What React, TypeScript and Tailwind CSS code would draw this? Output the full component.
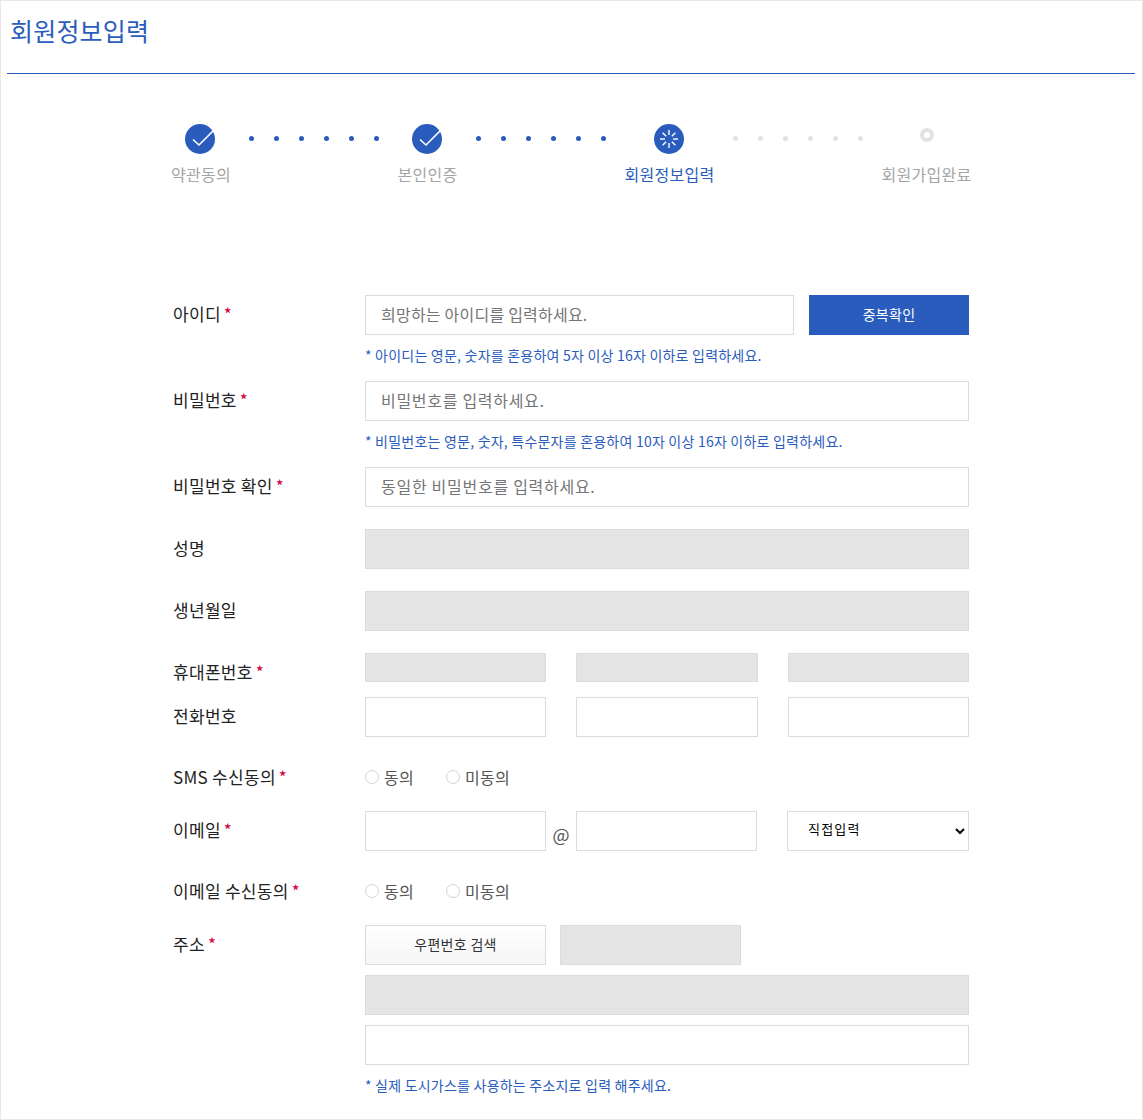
import React from "react";

const FONT = "[font-family:'Noto_Sans_CJK_KR','Noto_Sans',sans-serif]";

function Star() {
  return <span className="ml-[3px] text-[#d3003c]">*</span>;
}

function Check() {
  return (
    <span className="flex h-[30px] w-[30px] items-center justify-center rounded-full bg-[#2a5cbd]">
      <svg width="30" height="30" viewBox="0 0 30 30" fill="none" stroke="#fff" strokeWidth="1.6">
        <path d="M8 15.5 L14 21 L28.5 6.5" />
      </svg>
    </span>
  );
}

function Spinner() {
  const lines = [0, 45, 90, 135, 180, 225, 270, 315];
  return (
    <span className="flex h-[30px] w-[30px] items-center justify-center rounded-full bg-[#2a5cbd]">
      <svg width="30" height="30" viewBox="0 0 30 30" stroke="#fff" strokeWidth="1.4">
        {lines.map((a) => (
          <line key={a} x1="15" y1="6" x2="15" y2="11" transform={`rotate(${a} 15 15)`} />
        ))}
      </svg>
    </span>
  );
}

function Dots({ active }: { active: boolean }) {
  return (
    <div className="mt-[12px] flex w-[130px] gap-[20px]">
      {[0, 1, 2, 3, 4, 5].map((i) => (
        <span key={i} className={active ? "h-[5px] w-[5px] rounded-full bg-[#2a5cbd]" : "h-[5px] w-[5px] rounded-full bg-[#e2e2e2]"} />
      ))}
    </div>
  );
}

function Step({ w, iconClass = "", icon, label, active }: { w: string; iconClass?: string; icon: React.ReactNode; label: string; active?: boolean }) {
  return (
    <div className={`flex flex-col items-center ${w}`}>
      <div className={`flex h-[31px] items-start ${iconClass}`}>{icon}</div>
      <div className={active ? "mt-[7px] text-[16px] leading-[24px] tracking-[0.28px] text-[#2a5cbd]" : "mt-[7px] text-[16px] leading-[24px] tracking-[0.28px] text-[#a5a5a5]"}>{label}</div>
    </div>
  );
}

function Field({ className = "", placeholder, disabled }: { className?: string; placeholder?: string; disabled?: boolean }) {
  return (
    <input
      placeholder={placeholder}
      disabled={disabled}
      className={`h-[40px] border border-[#dcdcdc] px-[15px] pb-[3px] text-[16px] outline-none placeholder:text-[#757575] ${disabled ? "bg-[#e5e5e5]" : "bg-white"} ${className}`}
    />
  );
}

function Row({ label, star, children, className = "", labelClass = "" }: { label: string; star?: boolean; children: React.ReactNode; className?: string; labelClass?: string }) {
  return (
    <div className={`flex ${className}`}>
      <div className={`w-[192px] shrink-0 text-[17px] leading-[36px] tracking-[0.3px] text-[#222] ${labelClass}`}>
        {label}
        {star && <Star />}
      </div>
      <div className="min-w-0 flex-1">{children}</div>
    </div>
  );
}

function Hint({ children }: { children: React.ReactNode }) {
  return <p className="mt-[10px] h-[20px] text-[14px] leading-[20px] tracking-[0.22px] text-[#2a5cbd]">{children}</p>;
}

function Radio({ label }: { label: string }) {
  return (
    <label className="flex items-center text-[16px] leading-[24px] tracking-[0.28px] text-[#555]">
      <span className="mr-[5px] h-[14px] w-[14px] rounded-full border border-[#d5d5d5] bg-white" />
      {label}
    </label>
  );
}

function Radios() {
  return (
    <div className="flex h-[36px] items-center gap-[32px]">
      <Radio label="동의" />
      <Radio label="미동의" />
    </div>
  );
}

export default function App() {
  return (
    <div className={`h-[1120px] w-[1143px] overflow-hidden border border-[#e8e8e8] bg-white ${FONT}`}>
      <header className="mr-[7px] ml-[6px] h-[73px] border-b border-[#2a5cbd] pt-[11px]">
        <h1 className="pl-[3px] text-[25px] leading-[36px] tracking-[0.2px] text-[#2a5cbd]">회원정보입력</h1>
      </header>

      <div className="mt-[50px] ml-[152px] flex">
        <Step w="w-[96px]" iconClass="mr-[2px]" icon={<Check />} label="약관동의" />
        <Dots active />
        <Step w="w-[97px]" iconClass="mr-[1px]" icon={<Check />} label="본인인증" />
        <Dots active />
        <Step w="w-[127px]" iconClass="mr-[1px]" icon={<Spinner />} label="회원정보입력" active />
        <Dots active={false} />
        <Step
          w="w-[127px]"
          icon={<span className="mt-[4px] block h-[14px] w-[14px] rounded-full border-[4px] border-[#e2e2e2] bg-white" />}
          label="회원가입완료"
        />
      </div>

      <form className="mt-[109px] ml-[172px] w-[796px]">
        <Row label="아이디" star labelClass="pt-[1px]">
          <div className="flex gap-[15px]">
            <Field className="w-[429px] tracking-[0.22px]" placeholder="희망하는 아이디를 입력하세요." />
            <button type="button" className="h-[40px] w-[160px] bg-[#2a5cbd] pb-[2px] text-[14px] tracking-[0.3px] text-white">중복확인</button>
          </div>
          <Hint>* 아이디는 영문, 숫자를 혼용하여 5자 이상 16자 이하로 입력하세요.</Hint>
        </Row>
        <Row label="비밀번호" star className="mt-[16px]" labelClass="pt-[1px]">
          <Field className="w-full tracking-[0.7px]" placeholder="비밀번호를 입력하세요." />
          <Hint>* 비밀번호는 영문, 숫자, 특수문자를 혼용하여 10자 이상 16자 이하로 입력하세요.</Hint>
        </Row>
        <Row label="비밀번호 확인" star className="mt-[16px]" labelClass="pt-[1px]">
          <Field className="w-full tracking-[0.72px]" placeholder="동일한 비밀번호를 입력하세요." />
        </Row>
        <Row label="성명" className="mt-[22px]" labelClass="pt-[1px]">
          <Field className="w-full" disabled />
        </Row>
        <Row label="생년월일" className="mt-[22px]" labelClass="pt-[1px]">
          <Field className="w-full" disabled />
        </Row>
        <Row label="휴대폰번호" star className="mt-[22px] h-[29px]" labelClass="pt-[1px]">
          <div className="flex gap-[30px]">
            <Field className="!h-[29px] w-[181px]" disabled />
            <Field className="!h-[29px] w-[182px]" disabled />
            <Field className="!h-[29px] w-[181px]" disabled />
          </div>
        </Row>
        <Row label="전화번호" className="mt-[15px]" labelClass="pt-[1px]">
          <div className="flex gap-[30px]">
            <Field className="w-[181px]" />
            <Field className="w-[182px]" />
            <Field className="w-[181px]" />
          </div>
        </Row>
        <Row label="SMS 수신동의" star className="mt-[22px]">
          <Radios />
        </Row>
        <Row label="이메일" star className="mt-[16px]" labelClass="pt-[1px]">
          <div className="flex">
            <Field className="w-[181px]" />
            <span className="w-[30px] pt-[10px] text-center text-[18px] leading-[26px] text-[#555]">@</span>
            <Field className="w-[181px]" />
            <select className="ml-[30px] h-[40px] w-[182px] border border-[#dcdcdc] bg-white pb-[5px] pl-[16px] text-[13px] tracking-[1.2px] text-black outline-none">
              <option>직접입력</option>
            </select>
          </div>
        </Row>
        <Row label="이메일 수신동의" star className="mt-[22px]">
          <Radios />
        </Row>
        <Row label="주소" star className="mt-[16px]" labelClass="pt-[1px]">
          <div className="flex gap-[14px]">
            <button type="button" className="h-[40px] w-[181px] border border-[#dcdcdc] bg-gradient-to-b from-white to-[#f5f5f5] pb-[2px] text-[14px] tracking-[0.3px] text-[#333]">우편번호 검색</button>
            <Field className="w-[181px]" disabled />
          </div>
          <Field className="mt-[10px] block w-full" disabled />
          <Field className="mt-[10px] block w-full" />
          <Hint>* 실제 도시가스를 사용하는 주소지로 입력 해주세요.</Hint>
        </Row>
      </form>
    </div>
  );
}
